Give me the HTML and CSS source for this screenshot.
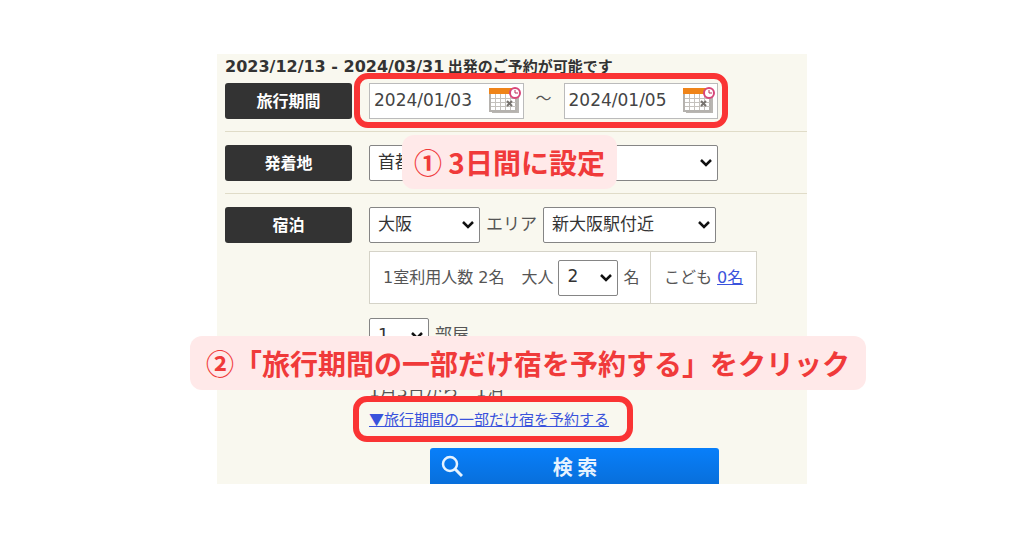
FILE: index.html
```
<!DOCTYPE html>
<html lang="ja">
<head>
    <meta charset="UTF-8">
    <meta name="viewport" content="width=device-width, initial-scale=1.0">
    <title>宿泊プラン検索</title>
    <link rel="stylesheet" href="styles.css">
</head>
<body>
    <svg class="symbols" aria-hidden="true">
        <symbol id="calendar" viewBox="0 0 34 30">
            <rect x="3" y="6" width="27" height="21" fill="#b9b6b2"/>
            <rect x="1" y="4" width="26" height="21" fill="#fff" stroke="#b5b2ae" stroke-width="2"/>
            <path d="M6.5 8v16M11.5 8v16M16.5 8v16M21.5 8v16M2 12.5h25M2 16.5h25M2 20.5h25" stroke="#c4c1bd" stroke-width="1"/>
            <rect x="0" y="2" width="28" height="6" fill="#ef8419"/>
            <path d="M18 15l5 5M23 15l-5 5" stroke="#77736f" stroke-width="2"/>
            <circle cx="26" cy="7" r="5" fill="#fff" stroke="#d8477a" stroke-width="2"/>
            <path d="M26 4v3h3" fill="none" stroke="#b92c58" stroke-width="1"/>
        </symbol>
    </svg>

    <main class="guide">
        <form class="search-panel">
            <p class="notice"><span class="notice-date">2023/12/13 - 2024/03/31</span> 出発のご予約が可能です</p>

            <div class="row">
                <label class="row-label" for="date-from">旅行期間</label>
                <div class="period">
                    <div class="date-field">
                        <input type="text" id="date-from" value="2024/01/03">
                        <button type="button" class="calendar-button" aria-label="出発日を選択">
                            <svg width="34" height="30"><use href="#calendar"/></svg>
                        </button>
                    </div>
                    <span class="tilde">～</span>
                    <div class="date-field">
                        <input type="text" id="date-to" value="2024/01/05" aria-label="帰着日">
                        <button type="button" class="calendar-button" aria-label="帰着日を選択">
                            <svg width="34" height="30"><use href="#calendar"/></svg>
                        </button>
                    </div>
                    <div class="highlight highlight-period"></div>
                </div>
            </div>

            <div class="row">
                <label class="row-label" for="departure">発着地</label>
                <div class="field">
                    <select id="departure" class="select-departure">
                        <option>首都圏</option>
                    </select>
                </div>
                <p class="callout callout-period">① 3日間に設定</p>
            </div>

            <div class="row">
                <label class="row-label" for="prefecture">宿泊</label>
                <div class="stay">
                    <div class="area">
                        <select id="prefecture" class="select-prefecture">
                            <option>大阪</option>
                        </select>
                        <label for="area">エリア</label>
                        <select id="area" class="select-area">
                            <option>新大阪駅付近</option>
                        </select>
                    </div>

                    <div class="guests">
                        <div class="guests-cell">
                            <span class="per-room">1室利用人数 2名</span>
                            <label for="adults">大人</label>
                            <select id="adults" class="select-number">
                                <option>2</option>
                            </select>
                            <span>名</span>
                        </div>
                        <div class="guests-cell guests-children">
                            <span>こども</span>
                            <a href="#">0名</a>
                        </div>
                    </div>

                    <div class="rooms">
                        <select id="rooms" class="select-number">
                            <option>1</option>
                        </select>
                        <label for="rooms">部屋</label>
                    </div>

                    <p class="nights">1月3日から　1泊</p>

                    <div class="partial">
                        <a href="#">▼旅行期間の一部だけ宿を予約する</a>
                        <div class="highlight highlight-partial"></div>
                    </div>
                </div>
            </div>

            <button type="submit" class="search-button">
                <svg width="22" height="22" viewBox="0 0 22 22" fill="none" stroke="#e6f3ff">
                    <circle cx="9" cy="9" r="7" stroke-width="2.5"/>
                    <path d="M14 14l7 7" stroke-width="3"/>
                </svg>
                <span>検 索</span>
            </button>
        </form>
        <p class="callout callout-partial">②「旅行期間の一部だけ宿を予約する」をクリック</p>
    </main>
</body>
</html>
```
FILE: styles.css
```
* {
    margin: 0;
    padding: 0;
    box-sizing: border-box;
}

body {
    padding: 54px 16px;
    background: #fff;
    color: #555;
    font-family: 'DejaVu Sans', 'Noto Sans CJK JP', sans-serif;
    font-size: 16px;
    line-height: 24px;
}

.symbols {
    display: none;
}

.guide {
    position: relative;
    max-width: 590px;
    margin: 0 auto;
}

.search-panel {
    padding-left: 8px;
    background: #f9f8ef;
}

.notice {
    color: #333;
    font-family: 'Noto Sans CJK JP', sans-serif;
    font-size: 15px;
    font-weight: bold;
}

.notice-date {
    font-family: 'DejaVu Sans', sans-serif;
    font-size: 16px;
}

/* 入力行 */
.row {
    position: relative;
    display: grid;
    grid-template-columns: 127px 1fr;
    column-gap: 17px;
    align-items: start;
    padding: 13px 0 12px;
    border-top: 1px solid #e0dcc8;
}

.notice + .row {
    padding-top: 4px;
    border-top: 0;
}

.row-label {
    height: 36px;
    border-radius: 3px;
    background: #333;
    color: #fff;
    font-family: 'Noto Sans CJK JP', sans-serif;
    font-weight: bold;
    line-height: 34px;
    text-align: center;
}

select {
    height: 36px;
    padding: 0 20px 3px 8px;
    border: 1px solid #858585;
    border-radius: 2px;
    background: #fff url("data:image/svg+xml,%3Csvg xmlns='http://www.w3.org/2000/svg' width='12' height='8' fill='none' stroke='%23111' stroke-width='2.5'%3E%3Cpath d='M1 1l5 5 5-5'/%3E%3C/svg%3E") no-repeat right 5px center;
    color: #333;
    font-family: inherit;
    font-size: 17px;
    appearance: none;
}

/* 旅行期間 */
.period {
    position: relative;
    display: flex;
    align-items: center;
    gap: 12px;
    width: 349px;
}

.date-field {
    display: flex;
    flex: 1;
    align-items: center;
    min-width: 0;
    height: 36px;
    border: 1px solid #bbb;
    background: #fff;
}

.date-field input {
    flex: 1;
    min-width: 0;
    padding: 0 0 2px 4px;
    border: 0;
    background: none;
    color: #444;
    font-family: inherit;
    font-size: 17px;
}

.calendar-button {
    height: 30px;
    border: 0;
    background: none;
    cursor: pointer;
}

.calendar-button svg {
    display: block;
}

.tilde {
    padding-bottom: 4px;
}

.highlight {
    position: absolute;
    border: 6px solid #fa3434;
    border-radius: 14px;
    pointer-events: none;
}

.highlight-period {
    inset: -10px -10px -9px -15px;
}

.highlight-partial {
    inset: -11px -24px -11px -16px;
}

.select-departure {
    width: 349px;
}

/* 宿泊 */
.area,
.rooms {
    display: flex;
    align-items: center;
    gap: 6px;
    font-size: 17px;
}

.area label,
.rooms label {
    padding-bottom: 2px;
}

.select-prefecture {
    width: 111px;
}

.select-area {
    width: 173px;
}

.guests {
    display: flex;
    width: 388px;
    margin: 8px 0 14px;
    border: 1px solid #d5d3c8;
    background: #fff;
}

.guests-cell {
    display: flex;
    flex: 1;
    align-items: center;
    gap: 5px;
    height: 51px;
    padding-left: 13px;
}

.guests-children {
    flex: 0 0 106px;
    border-left: 1px solid #d5d3c8;
}

.per-room {
    margin-right: 12px;
}

.select-number {
    width: 60px;
}

.nights {
    margin-top: 25px;
    font-size: 17px;
}

.partial {
    position: relative;
    width: fit-content;
    margin-top: 4px;
    font-family: 'Noto Sans CJK JP', sans-serif;
    font-size: 15px;
}

a {
    color: #3a53dc;
}

.search-button {
    display: flex;
    align-items: center;
    width: 289px;
    height: 36px;
    margin: 5px 0 0 205px;
    padding-left: 11px;
    border: 0;
    border-radius: 3px 3px 0 0;
    background: linear-gradient(#087ffa, #086fdb);
    color: #e6f3ff;
    font-family: 'Noto Sans CJK JP', sans-serif;
    font-size: 20px;
    font-weight: bold;
    cursor: pointer;
}

.search-button span {
    flex: 1;
    padding-right: 32px;
    text-align: center;
}

/* 手順の吹き出し */
.callout {
    position: absolute;
    border-radius: 12px;
    background: #ffe9e9;
    color: #f03a3a;
    font-family: 'Noto Sans CJK JP', sans-serif;
    font-size: 28px;
    font-weight: bold;
    line-height: 54px;
    text-align: center;
    white-space: nowrap;
}

.callout-period {
    top: 3px;
    left: 177px;
    padding: 0 12px;
}

.callout-partial {
    top: 282px;
    left: calc(50% + 16px);
    padding: 0 16px;
    transform: translateX(-50%);
}
```
